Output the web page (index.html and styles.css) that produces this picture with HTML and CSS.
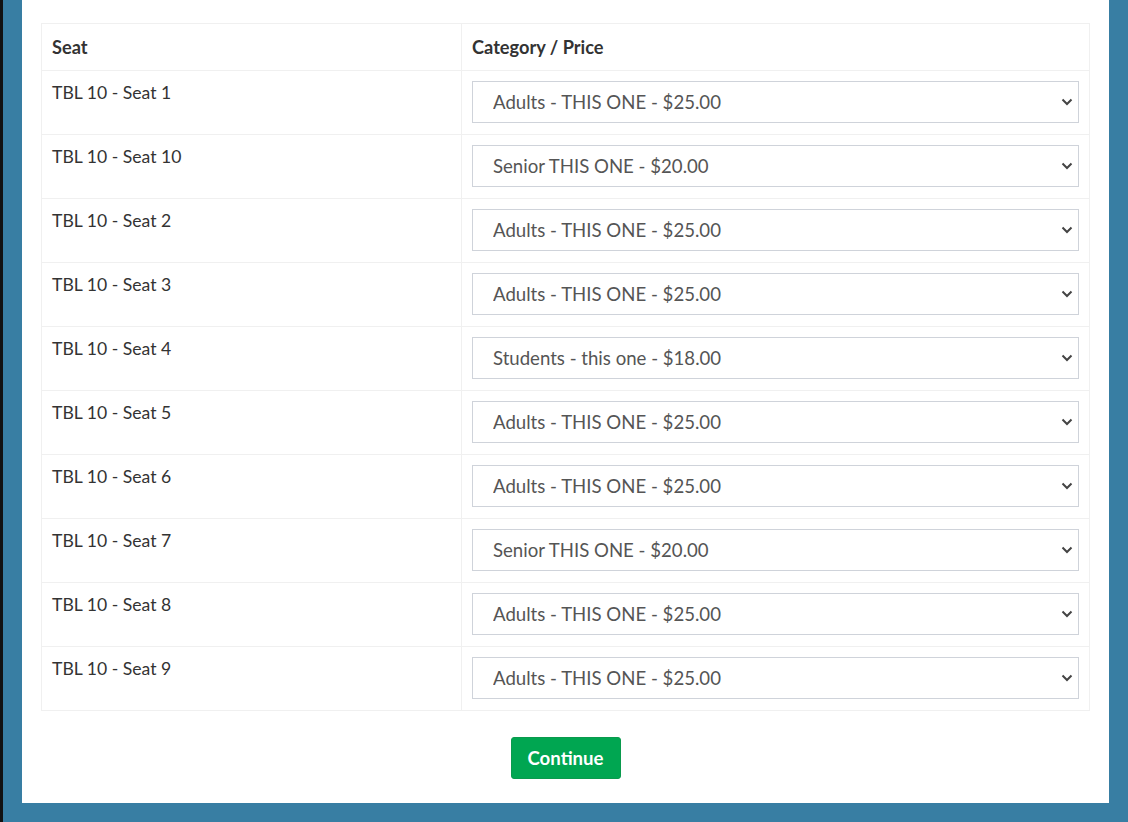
FILE: index.html
```html
<!DOCTYPE html>
<html>
    <head>
        <meta charset="utf-8">
        <title>Seats</title>
        <link rel="stylesheet" href="styles.css">
    </head>
    <body>
        <div class="panel">
            <table class="seat-table">
                <thead>
                    <tr>
                        <th class="col-seat">Seat</th>
                        <th>Category / Price</th>
                    </tr>
                </thead>
                <tbody>
                    <tr>
                        <td class="seat">TBL 10 - Seat 1</td>
                        <td><div class="pick"><select><option>Adults - THIS ONE - $25.00</option></select><svg class="chev" viewBox="0 0 12 8"><path d="M1.5 1.5 6 6l4.5-4.5"/></svg></div></td>
                    </tr>
                    <tr>
                        <td class="seat">TBL 10 - Seat 10</td>
                        <td><div class="pick"><select><option>Senior THIS ONE - $20.00</option></select><svg class="chev" viewBox="0 0 12 8"><path d="M1.5 1.5 6 6l4.5-4.5"/></svg></div></td>
                    </tr>
                    <tr>
                        <td class="seat">TBL 10 - Seat 2</td>
                        <td><div class="pick"><select><option>Adults - THIS ONE - $25.00</option></select><svg class="chev" viewBox="0 0 12 8"><path d="M1.5 1.5 6 6l4.5-4.5"/></svg></div></td>
                    </tr>
                    <tr>
                        <td class="seat">TBL 10 - Seat 3</td>
                        <td><div class="pick"><select><option>Adults - THIS ONE - $25.00</option></select><svg class="chev" viewBox="0 0 12 8"><path d="M1.5 1.5 6 6l4.5-4.5"/></svg></div></td>
                    </tr>
                    <tr>
                        <td class="seat">TBL 10 - Seat 4</td>
                        <td><div class="pick"><select><option>Students - this one - $18.00</option></select><svg class="chev" viewBox="0 0 12 8"><path d="M1.5 1.5 6 6l4.5-4.5"/></svg></div></td>
                    </tr>
                    <tr>
                        <td class="seat">TBL 10 - Seat 5</td>
                        <td><div class="pick"><select><option>Adults - THIS ONE - $25.00</option></select><svg class="chev" viewBox="0 0 12 8"><path d="M1.5 1.5 6 6l4.5-4.5"/></svg></div></td>
                    </tr>
                    <tr>
                        <td class="seat">TBL 10 - Seat 6</td>
                        <td><div class="pick"><select><option>Adults - THIS ONE - $25.00</option></select><svg class="chev" viewBox="0 0 12 8"><path d="M1.5 1.5 6 6l4.5-4.5"/></svg></div></td>
                    </tr>
                    <tr>
                        <td class="seat">TBL 10 - Seat 7</td>
                        <td><div class="pick"><select><option>Senior THIS ONE - $20.00</option></select><svg class="chev" viewBox="0 0 12 8"><path d="M1.5 1.5 6 6l4.5-4.5"/></svg></div></td>
                    </tr>
                    <tr>
                        <td class="seat">TBL 10 - Seat 8</td>
                        <td><div class="pick"><select><option>Adults - THIS ONE - $25.00</option></select><svg class="chev" viewBox="0 0 12 8"><path d="M1.5 1.5 6 6l4.5-4.5"/></svg></div></td>
                    </tr>
                    <tr>
                        <td class="seat">TBL 10 - Seat 9</td>
                        <td><div class="pick"><select><option>Adults - THIS ONE - $25.00</option></select><svg class="chev" viewBox="0 0 12 8"><path d="M1.5 1.5 6 6l4.5-4.5"/></svg></div></td>
                    </tr>
                </tbody>
            </table>
            <div class="actions">
                <button class="btn-continue">Continue</button>
            </div>
        </div>
    </body>
</html>
```

FILE: styles.css
```css
html, body {
    margin: 0;
    height: 100%;
}
body {
    background: #387ea3;
    border-left: 3px solid #111;
    font-family: "Lato", "Open Sans", sans-serif;
    color: #333;
    overflow: hidden;
}
.panel {
    background: #fff;
    margin-left: 19px;
    width: 1049px;
    padding: 23px 19px 24px 19px;
}
.seat-table {
    width: 100%;
    border-collapse: collapse;
    font-size: 17.6px;
}
.seat-table th,
.seat-table td {
    border: 1px solid #f0f0f0;
    text-align: left;
    vertical-align: top;
    line-height: 22px;
}
.seat-table th {
    padding: 12px 10px;
    font-size: 18.2px;
    font-weight: bold;
    color: #333;
}
.seat-table td {
    padding: 10px 10px 11px 10px;
}
.seat-table td.seat {
    padding-top: 11px;
}
.col-seat {
    width: 399px;
}
.pick {
    position: relative;
}
.pick select {
    display: block;
    width: 100%;
    height: 42px;
    margin: 0;
    padding: 0 30px 0 20px;
    border: 1px solid #cfd3da;
    border-radius: 0;
    background: #fff;
    color: #555;
    font-family: "Lato", "Open Sans", sans-serif;
    font-size: 18.6px;
    -webkit-appearance: none;
    appearance: none;
}
.chev {
    position: absolute;
    right: 6px;
    top: 17px;
    width: 12px;
    height: 8px;
    fill: none;
    stroke: #444;
    stroke-width: 2;
}
.actions {
    text-align: center;
    padding-top: 26px;
}
.btn-continue {
    width: 110px;
    height: 42px;
    background: #00a651;
    border: 1px solid #0a9a4d;
    border-radius: 3px;
    color: #fff;
    font-family: "Lato", "Open Sans", sans-serif;
    font-size: 18.6px;
    font-weight: bold;
    cursor: pointer;
}
```
